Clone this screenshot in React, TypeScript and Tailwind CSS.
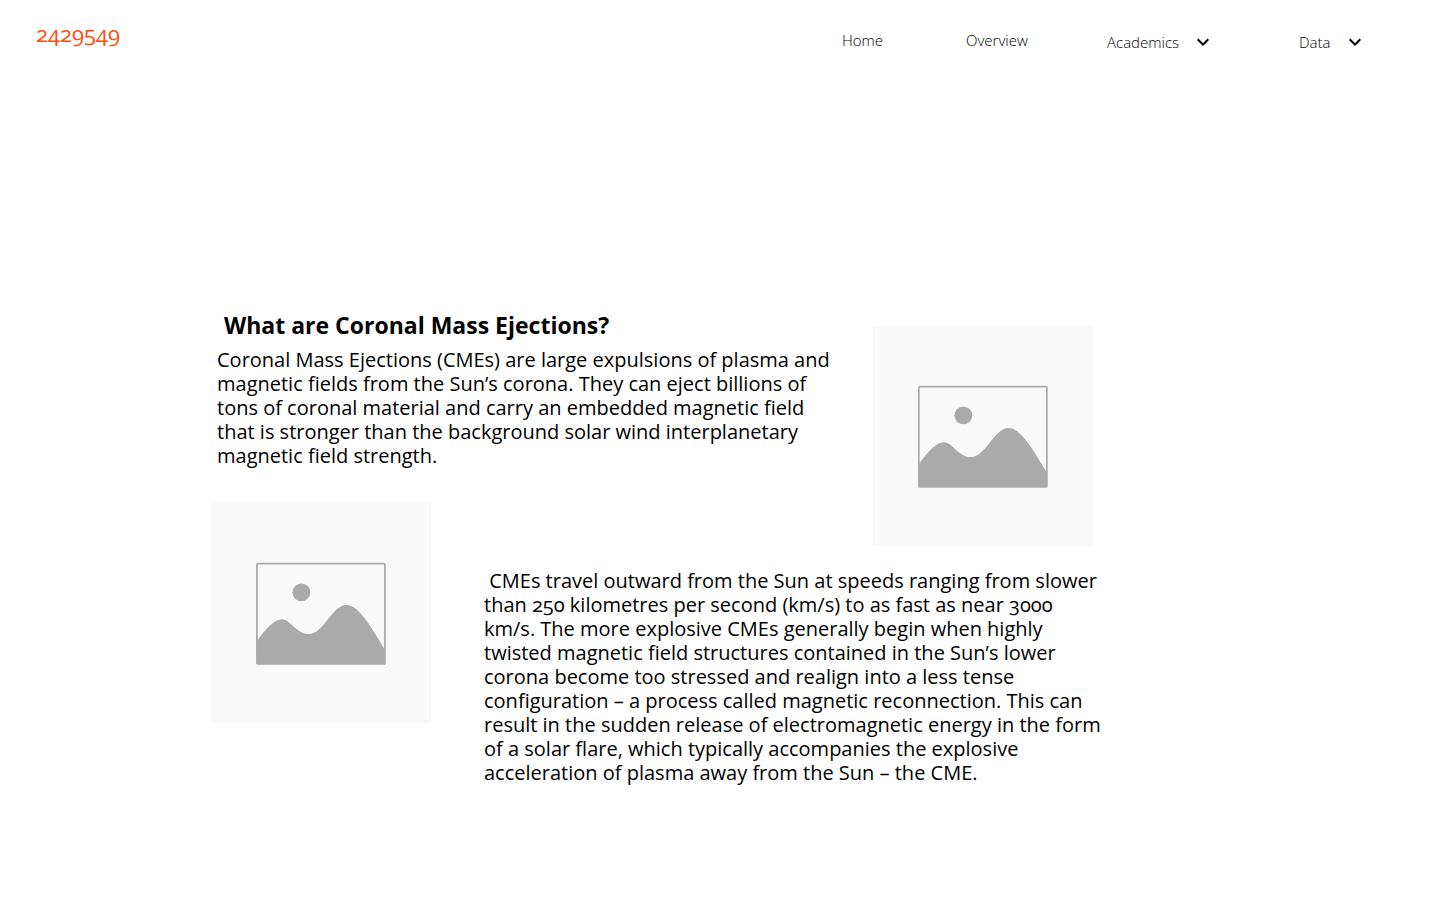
import React from "react";

function Chevron() {
  return (
    <svg viewBox="0 0 24 24" className="h-6 w-6 shrink-0 fill-black" aria-hidden="true">
      <path d="M16.59 8.59 12 13.17 7.41 8.59 6 10l6 6 6-6z" />
    </svg>
  );
}

function Placeholder({ className }: { className: string }) {
  return (
    <svg viewBox="0 0 220 220" className={`size-[220px] bg-[#f9f9f9] ${className}`} aria-hidden="true">
      <rect x="45.9" y="60.7" width="128" height="100.3" rx="1" fill="none" stroke="#aaaaaa" strokeWidth="1.7" />
      <circle cx="90.4" cy="89.4" r="8.9" fill="#aaaaaa" />
      <path
        d="M45.9 138C55 125 64 116.2 71 116.2C79.5 116.2 85 131 98 131C112.5 131 121 101.9 135.8 101.9C149 101.9 164 131 173.9 146.5V161H45.9Z"
        fill="#aaaaaa"
      />
    </svg>
  );
}

export default function App() {
  return (
    <div className="min-h-screen bg-white font-['Open_Sans',sans-serif] text-black [font-variant-numeric:oldstyle-nums]">
      <header className="flex items-start justify-between pt-5 pl-9">
        <a href="#" className="text-[22px] leading-[26px] text-[#ff4d0d]">
          2429549
        </a>
        <nav className="grid grid-cols-[124px_141px_192px_141px] items-start pt-2 text-[15px] leading-6 font-light">
          <a href="#home">Home</a>
          <a href="#overview">Overview</a>
          <button type="button" className="flex items-center gap-3 pt-[2px] text-left">
            Academics
            <Chevron />
          </button>
          <button type="button" className="flex items-center gap-3 pt-[2px] text-left">
            Data
            <Chevron />
          </button>
        </nav>
      </header>

      <main className="mt-[257px] ml-[211px] grid grid-cols-[273px_389px_234px] grid-rows-[192px_66px_auto] pb-28 text-xl leading-6">
        <section className="col-span-2 col-start-1 row-start-1 pl-[6px]">
          <h1 className="mb-[9px] pl-[7px] text-[23px] leading-7 font-bold">What are Coronal Mass Ejections?</h1>
          <p className="max-w-[623px]">
            Coronal Mass Ejections (CMEs) are large expulsions of plasma and magnetic fields from the Sun’s corona.
            They can eject billions of tons of coronal material and carry an embedded magnetic field that is stronger
            than the background solar wind interplanetary magnetic field strength.
          </p>
        </section>
        <Placeholder className="col-start-3 row-span-2 row-start-1 mt-[15px]" />
        <Placeholder className="col-start-1 row-span-2 row-start-2" />
        <p className="col-span-2 col-start-2 row-start-3">
          &nbsp;CMEs travel outward from the Sun at speeds ranging from slower than 250 kilometres per second (km/s) to
          as fast as near 3000 km/s. The more explosive CMEs generally begin when highly twisted magnetic field
          structures contained in the Sun’s lower corona become too stressed and realign into a less tense
          configuration – a process called magnetic reconnection. This can result in the sudden release of
          electromagnetic energy in the form of a solar flare, which typically accompanies the explosive acceleration
          of plasma away from the Sun – the CME.
        </p>
      </main>
    </div>
  );
}
